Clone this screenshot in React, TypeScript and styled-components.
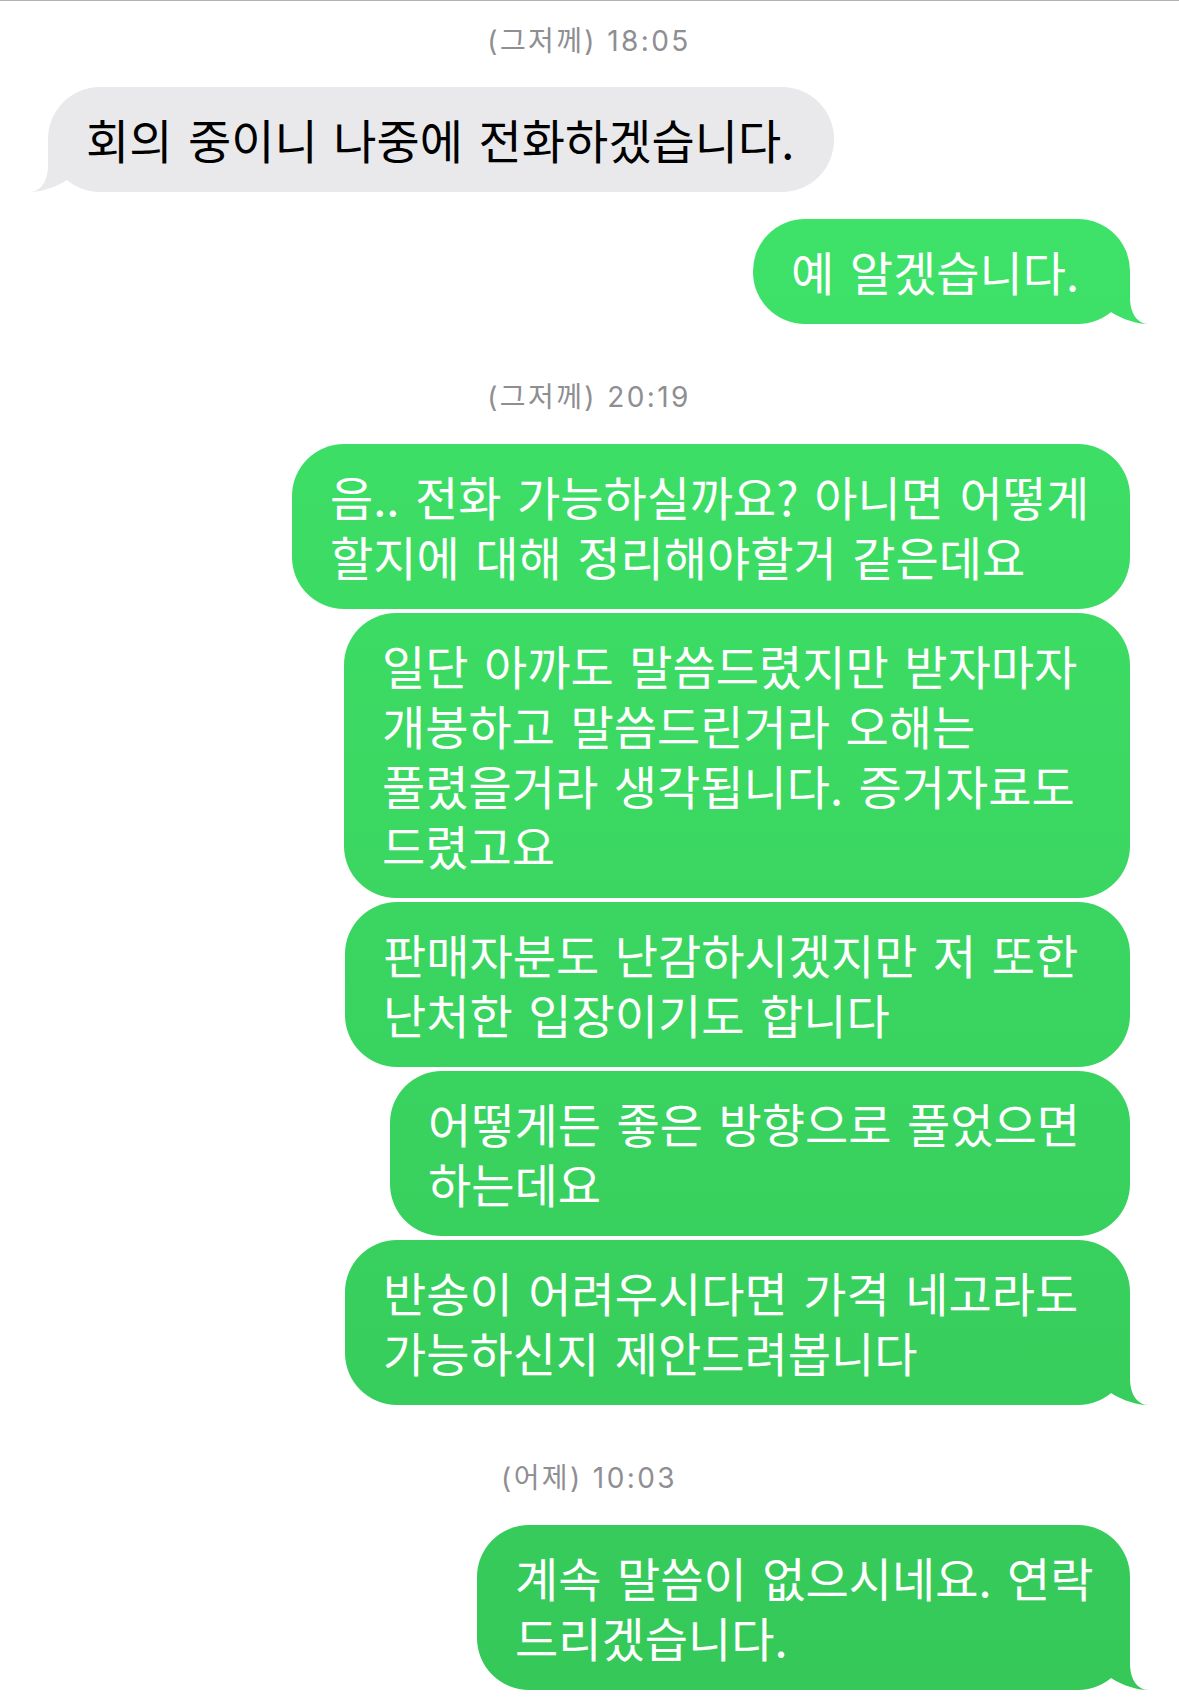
import React from "react";
import styled, { createGlobalStyle, css } from "styled-components";

type Sender = "me" | "them";

type Message = {
  lines: string[];
  width: number;
};

type Block =
  | { kind: "time"; label: string }
  | { kind: "run"; from: Sender; messages: Message[] };

const thread: Block[] = [
  { kind: "time", label: "(그저께) 18:05" },
  {
    kind: "run",
    from: "them",
    messages: [{ lines: ["회의 중이니 나중에 전화하겠습니다."], width: 786 }],
  },
  {
    kind: "run",
    from: "me",
    messages: [{ lines: ["예 알겠습니다."], width: 377 }],
  },
  { kind: "time", label: "(그저께) 20:19" },
  {
    kind: "run",
    from: "me",
    messages: [
      {
        lines: ["음.. 전화 가능하실까요? 아니면 어떻게", "할지에 대해 정리해야할거 같은데요"],
        width: 838,
      },
      {
        lines: [
          "일단 아까도 말씀드렸지만 받자마자",
          "개봉하고 말씀드린거라 오해는",
          "풀렸을거라 생각됩니다. 증거자료도",
          "드렸고요",
        ],
        width: 786,
      },
      {
        lines: ["판매자분도 난감하시겠지만 저 또한", "난처한 입장이기도 합니다"],
        width: 785,
      },
      {
        lines: ["어떻게든 좋은 방향으로 풀었으면", "하는데요"],
        width: 740,
      },
      {
        lines: ["반송이 어려우시다면 가격 네고라도", "가능하신지 제안드려봅니다"],
        width: 785,
      },
    ],
  },
  { kind: "time", label: "(어제) 10:03" },
  {
    kind: "run",
    from: "me",
    messages: [
      {
        lines: ["계속 말씀이 없으시네요. 연락", "드리겠습니다."],
        width: 653,
      },
    ],
  },
];

const App = () => {
  return (
    <>
      <GlobalStyle />
      <Thread>
        {thread.map((block, i) =>
          block.kind === "time" ? (
            <Timestamp key={i}>{block.label}</Timestamp>
          ) : (
            <Run key={i} $from={block.from}>
              {block.messages.map((m, j) => (
                <Bubble key={j} $from={block.from} $width={m.width}>
                  <Text>{m.lines.join("\n")}</Text>
                  {j === block.messages.length - 1 && <Tail $from={block.from} />}
                </Bubble>
              ))}
            </Run>
          )
        )}
      </Thread>
    </>
  );
};

export default App;

const GlobalStyle = createGlobalStyle`
  html, body {
    margin: 0;
    padding: 0;
    background: #ffffff;
  }
  body {
    font-family: "Noto Sans CJK KR", "Noto Sans", sans-serif;
  }
`;

const sentFill = css`
  background: linear-gradient(180deg, #40e66a 0%, #35c859 100%) fixed;
`;

const receivedFill = css`
  background: #e9e9eb;
`;

const Thread = styled.div`
  min-height: 1706px;
  border-top: 1px solid #b3b3b3;
  padding: 0 49px 0 48px;
  display: flex;
  flex-direction: column;
`;

const Timestamp = styled.div`
  margin: 56px 0 30px;
  text-align: center;
  font-family: "Inter", "Noto Sans CJK KR", sans-serif;
  font-size: 28px;
  line-height: 34px;
  letter-spacing: 2.4px;
  color: #8e8e93;

  &:first-child {
    margin-top: 23px;
    margin-bottom: 29px;
  }
`;

const Run = styled.div<{ $from: Sender }>`
  display: flex;
  flex-direction: column;
  gap: 4px;
  align-items: ${({ $from }) => ($from === "me" ? "flex-end" : "flex-start")};

  & + & {
    margin-top: 27px;
  }
`;

const Bubble = styled.div<{ $from: Sender; $width: number }>`
  position: relative;
  box-sizing: border-box;
  width: ${({ $width }) => $width}px;
  padding: 22px 0 23px 38px;
  border-radius: 52px;
  ${({ $from }) => ($from === "me" ? sentFill : receivedFill)};
  color: ${({ $from }) => ($from === "me" ? "#ffffff" : "#000000")};
  font-family: "Noto Sans CJK KR", sans-serif;
  font-size: 47px;
  line-height: 60px;
  letter-spacing: 0;
  word-spacing: 5px;
  white-space: pre;
`;

const Text = styled.span`
  position: relative;
  z-index: 1;
`;

const Tail = styled.span<{ $from: Sender }>`
  position: absolute;
  bottom: 0;
  width: 70px;
  height: 52px;
  ${({ $from }) =>
    $from === "me"
      ? css`
          right: -18px;
          ${sentFill};
          clip-path: path("M52 0 L52 25 C52 40 58 51 70 52 C62 52.5 45 48 33 40 L0 0 Z");
        `
      : css`
          left: -18px;
          ${receivedFill};
          clip-path: path("M18 0 L18 25 C18 40 12 51 0 52 C8 52.5 25 48 37 40 L70 0 Z");
        `}
`;
